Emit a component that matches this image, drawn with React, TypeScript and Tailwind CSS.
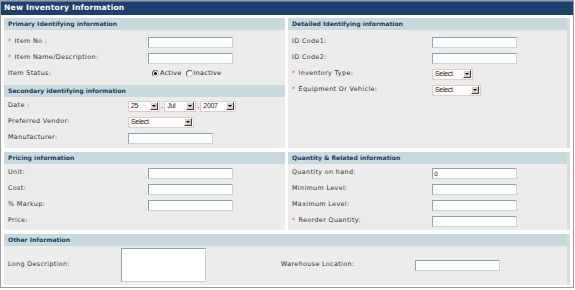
import React from "react";

const font = { fontFamily: '"DejaVu Sans", Verdana, sans-serif' };

function Star() {
  return <span className="text-[#e0504a] mr-[3px]">*</span>;
}

function Input({ w = "w-[85px]", value = "" }: { w?: string; value?: string }) {
  return (
    <div className={`${w} h-[11px] bg-white border border-[#8aa3b5] border-b-[#c9d4dc] border-r-[#c9d4dc] text-[6px] leading-[9px] pl-[1px] text-[#222]`}>
      {value}
    </div>
  );
}

function Select({ w, label }: { w: string; label: string }) {
  return (
    <div className={`${w} h-[11px] bg-white border border-[#e6c9c9] flex items-center justify-between pl-[2px] pr-[1px]`}>
      <span className="text-[7px] text-[#222] tracking-[-0.3px]" style={{ fontFamily: '"Liberation Sans", Arial, sans-serif' }}>
        {label}
      </span>
      <span className="w-[8px] h-[8px] bg-[#d4d0c8] border border-t-white border-l-white border-b-[#404040] border-r-[#404040] flex items-center justify-center">
        <span className="w-0 h-0 border-l-[2px] border-r-[2px] border-t-[2px] border-l-transparent border-r-transparent border-t-black" />
      </span>
    </div>
  );
}

function Header({ children }: { children: React.ReactNode }) {
  return (
    <div className="h-[12px] bg-[#c9dade] text-[#173a66] font-bold text-[6.1px] leading-[12px] pl-[4px] shrink-0">
      {children}
    </div>
  );
}

function Row({
  label,
  req,
  labelW = "w-[144px]",
  children,
}: {
  label: string;
  req?: boolean;
  labelW?: string;
  children?: React.ReactNode;
}) {
  return (
    <div className="h-[16px] flex items-center">
      <div className={`${labelW} pl-[4px] text-[6.4px] tracking-[0.35px] text-[#333] shrink-0`}>
        {req && <Star />}
        {label}
      </div>
      {children}
    </div>
  );
}

function Radio({ on }: { on?: boolean }) {
  return (
    <span className="w-[7px] h-[7px] rounded-full bg-white border border-[#555] border-b-[#ccc] border-r-[#ccc] flex items-center justify-center">
      {on && <span className="w-[3px] h-[3px] rounded-full bg-black" />}
    </span>
  );
}

export default function App() {
  return (
    <div className="w-[575px] h-[290px] bg-white" style={font}>
      <div className="w-[574px] h-[288px] border border-[#9c9c9c] flex flex-col">
        {/* Title bar */}
        <div className="h-[14px] bg-[#1d416c] border-t border-[#5c7b9c] text-white font-bold text-[7.6px] tracking-[0.2px] leading-[12px] pl-[3px] shrink-0">
          New Inventory Information
        </div>

        <div className="flex flex-col gap-[4px] pl-[3px] pr-[3px] pt-[3px]">
          {/* Row 1 */}
          <div className="flex gap-[3px] h-[130px]">
            <div className="w-[281px] bg-[#ececec] flex flex-col">
              <Header>Primary Identifying information</Header>
              <div className="pt-[4px] pb-[3px]">
                <Row label="Item No :" req>
                  <Input />
                </Row>
                <Row label="Item Name/Description:" req>
                  <Input />
                </Row>
                <Row label="Item Status:">
                  <div className="flex items-center text-[6.4px] tracking-[0.3px] text-[#222] pl-[4px]">
                    <Radio on />
                    <span className="ml-[1px] mr-[4px]">Active</span>
                    <Radio />
                    <span className="ml-[1px]">Inactive</span>
                  </div>
                </Row>
              </div>
              <Header>Secondary identifying information</Header>
              <div className="pt-[1px]">
                <Row label="Date :" labelW="w-[124px]">
                  <div className="flex items-center text-[6px] text-[#555]">
                    <Select w="w-[32px]" label="25" />
                    <span className="px-[1px]">-</span>
                    <Select w="w-[32px]" label="Jul" />
                    <span className="px-[1px]">-</span>
                    <Select w="w-[36px]" label="2007" />
                  </div>
                </Row>
                <Row label="Preferred Vendor:" labelW="w-[124px]">
                  <Select w="w-[66px]" label="Select" />
                </Row>
                <Row label="Manufacturer:" labelW="w-[124px]">
                  <Input />
                </Row>
              </div>
            </div>

            <div className="flex-1 bg-[#ececec] flex flex-col border-r-[3px] border-[#dcdcdc]">
              <Header>Detailed Identifying information</Header>
              <div className="pt-[4px]">
                <Row label="ID Code1:">
                  <Input />
                </Row>
                <Row label="ID Code2:">
                  <Input />
                </Row>
                <Row label="Inventory Type:" req>
                  <Select w="w-[41px]" label="Select" />
                </Row>
                <Row label="Equipment Or Vehicle:" req>
                  <Select w="w-[49px]" label="Select" />
                </Row>
              </div>
            </div>
          </div>

          {/* Row 2 */}
          <div className="flex gap-[3px] h-[78px]">
            <div className="w-[281px] bg-[#ececec] flex flex-col">
              <Header>Pricing information</Header>
              <div className="pt-[1px]">
                <Row label="Unit:">
                  <Input />
                </Row>
                <Row label="Cost:">
                  <Input />
                </Row>
                <Row label="% Markup:">
                  <Input />
                </Row>
                <Row label="Price:" />
              </div>
            </div>
            <div className="flex-1 bg-[#ececec] flex flex-col border-r-[3px] border-[#dcdcdc]">
              <Header>Quantity &amp; Related information</Header>
              <div className="pt-[1px]">
                <Row label="Quantity on hand:">
                  <Input value="0" />
                </Row>
                <Row label="Minimum Level:">
                  <Input />
                </Row>
                <Row label="Maximum Level:">
                  <Input />
                </Row>
                <Row label="Reorder Quantity:" req>
                  <Input />
                </Row>
              </div>
            </div>
          </div>

          {/* Row 3 */}
          <div className="h-[51px] bg-[#ececec] flex flex-col border-r-[3px] border-[#dcdcdc]">
            <Header>Other Information</Header>
            <div className="flex items-center flex-1 pb-[1px]">
              <div className="w-[117px] pl-[4px] text-[6.4px] tracking-[0.35px] text-[#333] shrink-0">
                Long Description:
              </div>
              <div className="w-[85px] h-[34px] bg-white border border-[#8aa3b5] border-b-[#c9d4dc] border-r-[#c9d4dc] shrink-0" />
              <div className="w-[75px] shrink-0" />
              <div className="w-[134px] text-[6.4px] tracking-[0.35px] text-[#333] shrink-0">
                Warehouse Location:
              </div>
              <Input />
            </div>
          </div>
        </div>
      </div>
    </div>
  );
}
